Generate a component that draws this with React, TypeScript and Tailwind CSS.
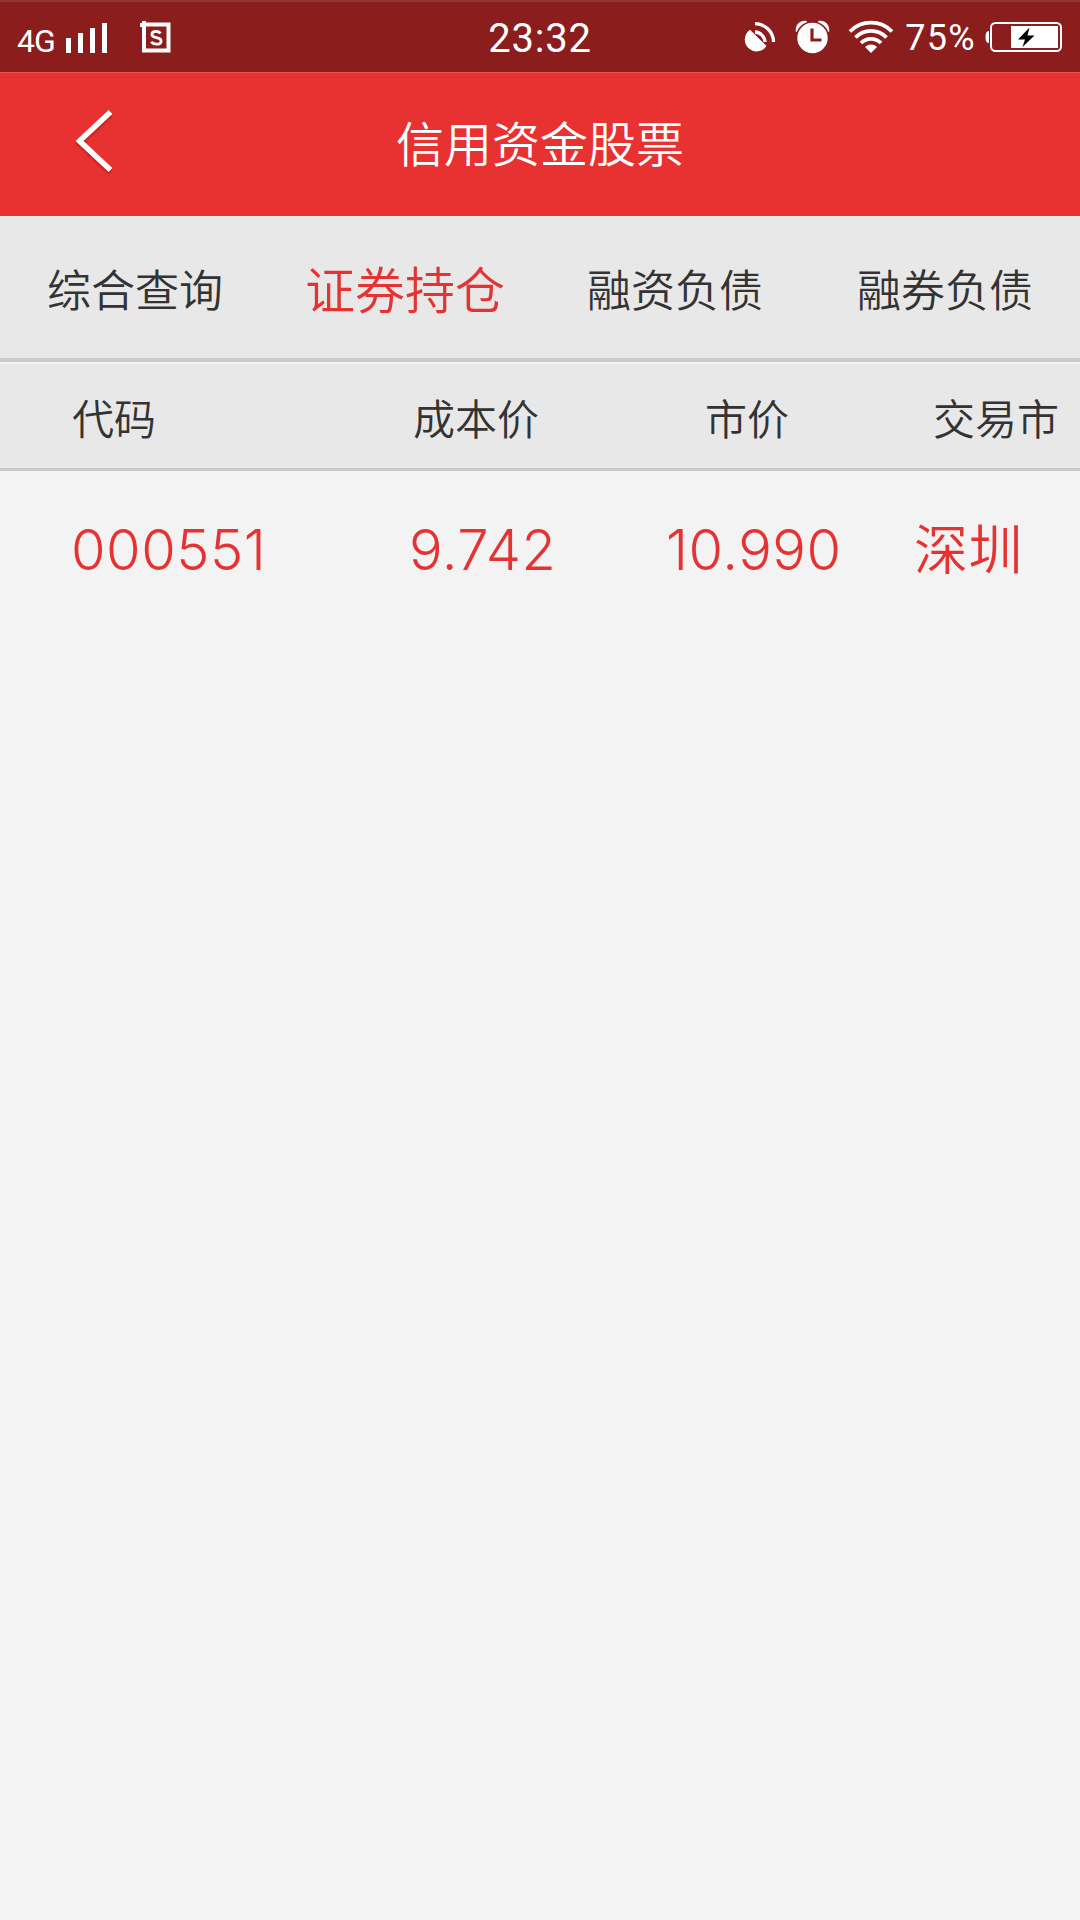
import { useState } from 'react';
import clsx from 'clsx';

interface Holding {
  code: string;
  cost: string;
  price: string;
  market: string;
}

const tabs = ['综合查询', '证券持仓', '融资负债', '融券负债'];

const holdings: Holding[] = [
  { code: '000551', cost: '9.742', price: '10.990', market: '深圳' },
];

function StatusBar() {
  return (
    <div className="flex h-[72px] items-center border-t-2 border-[#8f3535] bg-[#8b1e1d] pl-[17px] pr-[17px] font-['Roboto',sans-serif] font-normal text-white">
      <div className="flex flex-1 items-center">
        <span className="mt-2 text-[32px] leading-none tracking-[-1px]">4G</span>
        <svg className="ml-[11px] mt-0.5" width="42" height="32" viewBox="0 0 42 32" fill="currentColor">
          <rect x="0" y="16" width="5" height="15" />
          <rect x="12" y="11" width="5" height="20" />
          <rect x="24" y="6" width="5" height="25" />
          <rect x="36" y="1" width="5" height="30" />
        </svg>
        <svg className="ml-[32px]" width="32" height="34" viewBox="0 0 32 34" fill="none" stroke="currentColor">
          <path d="M4 4.5h24.5v26H4z" strokeWidth="4" />
          <path d="M0 5h6M4 1v6" strokeWidth="4" />
          <path d="M20.6 13.4c-1.2-1.4-2.6-2-4.5-2-2.500 0-4.200 1.200-4.200 3 0 4.500 9.200 1.800 9.200 6.500 0 2-1.800 3.300-4.700 3.300-2.100 0-3.900-.7-5.200-2.300" strokeWidth="2.800" />
        </svg>
      </div>
      <span className="mt-[3px] text-[40px] leading-none tracking-[0.8px]">23:32</span>
      <div className="flex flex-1 items-center justify-end">
        <svg width="32" height="32" viewBox="0 0 32 32">
          <path d="M6 8.800 22.500 25A11.800 11.800 0 1 1 6 8.800Z" fill="currentColor" />
          <path d="M11 2.700A18.500 18.500 0 0 1 29.500 21M11 11A10.500 10.500 0 0 1 21 21" fill="none" stroke="currentColor" strokeWidth="3.300" />
        </svg>
        <svg className="ml-[19px]" width="36" height="34" viewBox="0 0 36 34">
          <path d="M.8 11.500C0 4 6 0 11.500 1L14 5 5 14ZM34.200 11.500C35 4 29 0 23.500 1L21 5 30 14Z" fill="currentColor" />
          <circle cx="17.500" cy="18" r="16" fill="currentColor" stroke="#8b1e1d" strokeWidth="1.600" />
          <path d="M17 8.500v11.500h9.500" fill="none" stroke="#8b1e1d" strokeWidth="3.200" />
        </svg>
        <svg className="ml-[17px]" width="46" height="34" viewBox="0 0 46 34" fill="none" stroke="currentColor" strokeWidth="3.800">
          <path d="M2 11.500a29.500 29.500 0 0 1 42 0M7.500 17.500a21.500 21.500 0 0 1 31 0M13 23a14 14 0 0 1 20 0" />
          <path d="M17 27a8.500 8.500 0 0 1 12 0l-6 6z" fill="currentColor" stroke="none" />
        </svg>
        <span className="ml-[11px] mt-0.5 text-[36px] leading-none tracking-[1.3px]">75%</span>
        <svg className="ml-[9px]" width="78" height="32" viewBox="0 0 78 32">
          <path d="M4 10v12C1.500 22 .5 20 .5 16S1.500 10 4 10Z" fill="currentColor" />
          <rect x="6" y="2" width="70" height="28" rx="4.500" fill="none" stroke="currentColor" strokeWidth="2" />
          <rect x="26" y="5" width="47" height="22" fill="currentColor" />
          <path d="M44.500 6.500 33 18.500h7l-2.500 7.500L49.500 14.500h-7z" fill="#000" />
        </svg>
      </div>
    </div>
  );
}

export default function App() {
  const [active, setActive] = useState(1);

  return (
    <div className="flex h-[1920px] w-[1080px] flex-col overflow-hidden bg-[#f3f3f3] font-['Noto_Sans_CJK_SC',sans-serif] font-[350] text-[#333]">
      <StatusBar />

      {/* Title bar */}
      <header className="grid h-[144px] grid-cols-[1fr_auto_1fr] items-center border-t border-[#ee5050] bg-[#e83131] pb-[8px] text-white">
        <button className="ml-[76px] mt-[3px] w-10">
          <svg className="drop-shadow-[0_2px_1px_rgba(120,0,0,0.4)]" width="38" height="64" viewBox="0 0 38 64" fill="none" stroke="currentColor" strokeWidth="5.500">
            <path d="M34.500 2 3.500 31l31 29" />
          </svg>
        </button>
        <h1 className="text-[48px] leading-none">信用资金股票</h1>
      </header>

      {/* Tabs */}
      <nav className="grid h-[146px] grid-cols-4 items-center border-b-[4px] border-[#cbcbcb] bg-[#e8e8e8]">
        {tabs.map((tab, i) => (
          <button
            key={tab}
            onClick={() => setActive(i)}
            className={clsx('text-center leading-none', i === active ? 'text-[50px] text-[#e53232]' : 'pt-px text-[44px]')}
          >
            {tab}
          </button>
        ))}
      </nav>

      {/* Holdings table */}
      <div className="grid h-[109px] grid-cols-[341px_292px_228px_auto] items-center whitespace-nowrap border-b-[3px] border-t-2 border-b-[#cbcbcb] border-t-[#f3f3f3] bg-[#e8e8e8] pl-[72px] pt-0.5 text-[42px] leading-none">
        <span>代码</span>
        <span>成本价</span>
        <span>市价</span>
        <span>交易市</span>
      </div>
      {holdings.map((h) => (
        <div
          key={h.code}
          className="grid h-[158px] grid-cols-[338px_257px_248px_auto] items-center whitespace-nowrap pl-[71px] font-['Inter','Noto_Sans_CJK_SC',sans-serif] text-[56px] font-[350] leading-none tracking-[0.5px] text-[#e53232]"
        >
          <span>{h.code}</span>
          <span>{h.cost}</span>
          <span>{h.price}</span>
          <span className="pb-1.5 font-['Noto_Sans_CJK_SC',sans-serif] text-[54px]">{h.market}</span>
        </div>
      ))}
    </div>
  );
}
